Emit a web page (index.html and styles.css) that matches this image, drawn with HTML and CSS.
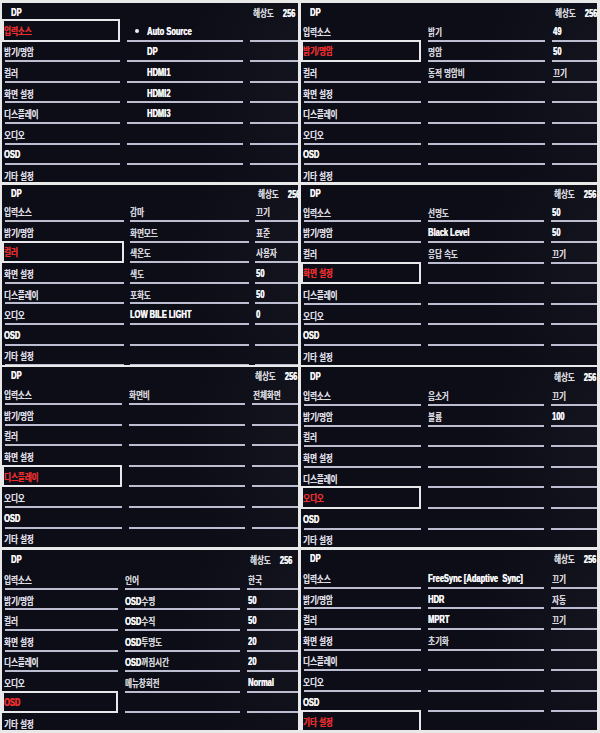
FILE: index.html
```html
<!DOCTYPE html>
<html lang="ko">
<head>
<meta charset="utf-8">
<title>OSD 메뉴</title>
<link rel="stylesheet" href="styles.css">
</head>
<body>
<main class="sheet">

<section class="osd p1">
  <div class="hd"><b class="t">DP</b></div>
  <div class="res"><span class="t">해상도<b>256</b></span></div>
  <div class="c1 sel"><span class="t">입력소스</span></div><div class="c2 ind"><i class="dot"></i><b class="t">Auto Source</b></div><div class="c3"></div>
  <div class="c1"><span class="t">밝기/명암</span></div><div class="c2 ind"><b class="t">DP</b></div><div class="c3"></div>
  <div class="c1"><span class="t">컬러</span></div><div class="c2 ind"><b class="t">HDMI1</b></div><div class="c3"></div>
  <div class="c1"><span class="t">화면 설정</span></div><div class="c2 ind"><b class="t">HDMI2</b></div><div class="c3"></div>
  <div class="c1"><span class="t">디스플레이</span></div><div class="c2 ind"><b class="t">HDMI3</b></div><div class="c3"></div>
  <div class="c1"><span class="t">오디오</span></div><div class="c2"></div><div class="c3"></div>
  <div class="c1"><b class="t">OSD</b></div><div class="c2"></div><div class="c3"></div>
  <div class="c1"><span class="t">기타 설정</span></div><div class="c2"></div><div class="c3"></div>
</section>

<section class="osd p2">
  <div class="hd"><b class="t">DP</b></div>
  <div class="res"><span class="t">해상도<b>256</b></span></div>
  <div class="c1"><span class="t">입력소스</span></div><div class="c2"><span class="t">밝기</span></div><div class="c3"><b class="t">49</b></div>
  <div class="c1 sel"><span class="t">밝기/명암</span></div><div class="c2"><span class="t">명암</span></div><div class="c3"><b class="t">50</b></div>
  <div class="c1"><span class="t">컬러</span></div><div class="c2"><span class="t">동적 명암비</span></div><div class="c3"><span class="t">끄기</span></div>
  <div class="c1"><span class="t">화면 설정</span></div><div class="c2"></div><div class="c3"></div>
  <div class="c1"><span class="t">디스플레이</span></div><div class="c2"></div><div class="c3"></div>
  <div class="c1"><span class="t">오디오</span></div><div class="c2"></div><div class="c3"></div>
  <div class="c1"><b class="t">OSD</b></div><div class="c2"></div><div class="c3"></div>
  <div class="c1"><span class="t">기타 설정</span></div><div class="c2"></div><div class="c3"></div>
</section>

<section class="osd p3">
  <div class="hd"><b class="t">DP</b></div>
  <div class="res"><span class="t">해상도<b>256</b></span></div>
  <div class="c1"><span class="t">입력소스</span></div><div class="c2"><span class="t">감마</span></div><div class="c3"><span class="t">끄기</span></div>
  <div class="c1"><span class="t">밝기/명암</span></div><div class="c2"><span class="t">화면모드</span></div><div class="c3"><span class="t">표준</span></div>
  <div class="c1 sel"><span class="t">컬러</span></div><div class="c2"><span class="t">색온도</span></div><div class="c3"><span class="t">사용자</span></div>
  <div class="c1"><span class="t">화면 설정</span></div><div class="c2"><span class="t">색도</span></div><div class="c3"><b class="t">50</b></div>
  <div class="c1"><span class="t">디스플레이</span></div><div class="c2"><span class="t">포화도</span></div><div class="c3"><b class="t">50</b></div>
  <div class="c1"><span class="t">오디오</span></div><div class="c2"><b class="t">LOW BILE LIGHT</b></div><div class="c3"><b class="t">0</b></div>
  <div class="c1"><b class="t">OSD</b></div><div class="c2"></div><div class="c3"></div>
  <div class="c1"><span class="t">기타 설정</span></div><div class="c2"></div><div class="c3"></div>
</section>

<section class="osd p4">
  <div class="hd"><b class="t">DP</b></div>
  <div class="res"><span class="t">해상도<b>256</b></span></div>
  <div class="c1"><span class="t">입력소스</span></div><div class="c2"><span class="t">선명도</span></div><div class="c3"><b class="t">50</b></div>
  <div class="c1"><span class="t">밝기/명암</span></div><div class="c2"><b class="t">Black Level</b></div><div class="c3"><b class="t">50</b></div>
  <div class="c1"><span class="t">컬러</span></div><div class="c2"><span class="t">응답 속도</span></div><div class="c3"><span class="t">끄기</span></div>
  <div class="c1 sel"><span class="t">화면 설정</span></div><div class="c2"></div><div class="c3"></div>
  <div class="c1"><span class="t">디스플레이</span></div><div class="c2"></div><div class="c3"></div>
  <div class="c1"><span class="t">오디오</span></div><div class="c2"></div><div class="c3"></div>
  <div class="c1"><b class="t">OSD</b></div><div class="c2"></div><div class="c3"></div>
  <div class="c1"><span class="t">기타 설정</span></div><div class="c2"></div><div class="c3"></div>
</section>

<section class="osd p5">
  <div class="hd"><b class="t">DP</b></div>
  <div class="res"><span class="t">해상도<b>256</b></span></div>
  <div class="c1"><span class="t">입력소스</span></div><div class="c2"><span class="t">화면비</span></div><div class="c3"><span class="t">전체화면</span></div>
  <div class="c1"><span class="t">밝기/명암</span></div><div class="c2"></div><div class="c3"></div>
  <div class="c1"><span class="t">컬러</span></div><div class="c2"></div><div class="c3"></div>
  <div class="c1"><span class="t">화면 설정</span></div><div class="c2"></div><div class="c3"></div>
  <div class="c1 sel"><span class="t">디스플레이</span></div><div class="c2"></div><div class="c3"></div>
  <div class="c1"><span class="t">오디오</span></div><div class="c2"></div><div class="c3"></div>
  <div class="c1"><b class="t">OSD</b></div><div class="c2"></div><div class="c3"></div>
  <div class="c1"><span class="t">기타 설정</span></div><div class="c2"></div><div class="c3"></div>
</section>

<section class="osd p6">
  <div class="hd"><b class="t">DP</b></div>
  <div class="res"><span class="t">해상도<b>256</b></span></div>
  <div class="c1"><span class="t">입력소스</span></div><div class="c2"><span class="t">음소거</span></div><div class="c3"><span class="t">끄기</span></div>
  <div class="c1"><span class="t">밝기/명암</span></div><div class="c2"><span class="t">볼륨</span></div><div class="c3"><b class="t">100</b></div>
  <div class="c1"><span class="t">컬러</span></div><div class="c2"></div><div class="c3"></div>
  <div class="c1"><span class="t">화면 설정</span></div><div class="c2"></div><div class="c3"></div>
  <div class="c1"><span class="t">디스플레이</span></div><div class="c2"></div><div class="c3"></div>
  <div class="c1 sel"><span class="t">오디오</span></div><div class="c2"></div><div class="c3"></div>
  <div class="c1"><b class="t">OSD</b></div><div class="c2"></div><div class="c3"></div>
  <div class="c1"><span class="t">기타 설정</span></div><div class="c2"></div><div class="c3"></div>
</section>

<section class="osd p7">
  <div class="hd"><b class="t">DP</b></div>
  <div class="res"><span class="t">해상도<b>256</b></span></div>
  <div class="c1"><span class="t">입력소스</span></div><div class="c2"><span class="t">언어</span></div><div class="c3"><span class="t">한국</span></div>
  <div class="c1"><span class="t">밝기/명암</span></div><div class="c2"><span class="t"><b>OSD</b>수평</span></div><div class="c3"><b class="t">50</b></div>
  <div class="c1"><span class="t">컬러</span></div><div class="c2"><span class="t"><b>OSD</b>수직</span></div><div class="c3"><b class="t">50</b></div>
  <div class="c1"><span class="t">화면 설정</span></div><div class="c2"><span class="t"><b>OSD</b>투명도</span></div><div class="c3"><b class="t">20</b></div>
  <div class="c1"><span class="t">디스플레이</span></div><div class="c2"><span class="t"><b>OSD</b>꺼짐시간</span></div><div class="c3"><b class="t">20</b></div>
  <div class="c1"><span class="t">오디오</span></div><div class="c2"><span class="t">메뉴창회전</span></div><div class="c3"><b class="t">Normal</b></div>
  <div class="c1 sel"><b class="t">OSD</b></div><div class="c2"></div><div class="c3"></div>
  <div class="c1"><span class="t">기타 설정</span></div><div class="c2"></div><div class="c3"></div>
</section>

<section class="osd p8">
  <div class="hd"><b class="t">DP</b></div>
  <div class="res"><span class="t">해상도<b>256</b></span></div>
  <div class="c1"><span class="t">입력소스</span></div><div class="c2"><b class="t">FreeSync [Adaptive&nbsp; Sync]</b></div><div class="c3"><span class="t">끄기</span></div>
  <div class="c1"><span class="t">밝기/명암</span></div><div class="c2"><b class="t">HDR</b></div><div class="c3"><span class="t">자동</span></div>
  <div class="c1"><span class="t">컬러</span></div><div class="c2"><b class="t">MPRT</b></div><div class="c3"><span class="t">끄기</span></div>
  <div class="c1"><span class="t">화면 설정</span></div><div class="c2"><span class="t">초기화</span></div><div class="c3"></div>
  <div class="c1"><span class="t">디스플레이</span></div><div class="c2"></div><div class="c3"></div>
  <div class="c1"><span class="t">오디오</span></div><div class="c2"></div><div class="c3"></div>
  <div class="c1"><b class="t">OSD</b></div><div class="c2"></div><div class="c3"></div>
  <div class="c1 sel"><span class="t">기타 설정</span></div><div class="c2"></div><div class="c3"></div>
</section>

</main>
</body>
</html>
```

FILE: styles.css
```css
html, body {
  margin: 0;
  padding: 0;
  background: #e9e9ea;
}

.sheet {
  width: 600px;
  height: 733px;
  box-sizing: border-box;
  padding: 3px 3px 0 2px;
  display: grid;
  grid-template-columns: 296px 296px;
  grid-template-rows: 179px 180px 180px 180px;
  column-gap: 3px;
  row-gap: 2.5px;
}

.osd {
  --c1: 120px;
  --c2: 116px;
  --gap: 7px;
  --hd: 18px;
  --line: #bcbdd0;
  display: grid;
  grid-template-columns: var(--c1) var(--c2) 1fr;
  grid-template-rows: var(--hd) repeat(8, 20.6px);
  column-gap: var(--gap);
  align-content: start;
  overflow: hidden;
  background:
    radial-gradient(ellipse 70% 130% at 110% 40%, rgba(120, 125, 150, 0.08), rgba(0, 0, 0, 0) 70%),
    #0c0d16;
  font-family: "Liberation Sans", "Noto Sans CJK KR", sans-serif;
  font-size: 10px;
  font-weight: 500;
  color: #dedee3;
  white-space: nowrap;
}

.p1 { --c1: 118px; }
.p2 { --c2: 117px; }
.p3 { --c1: 122px; --c2: 119px; --gap: 6px; --hd: 17px; }
.p4 { --hd: 17.4px; }
.p5 { --hd: 17.4px; }
.p6 { --hd: 18.4px; }
.p7 { --c1: 116px; --c2: 115px; --hd: 19.8px; }
.p8 { --hd: 18.7px; }

.t {
  display: inline-block;
  transform: scaleX(0.75);
  transform-origin: 0 50%;
  text-shadow: 0.35px 0 0 currentColor, 0 0 1px rgba(255, 255, 255, 0.25);
}

b {
  font-weight: 700;
  color: #f5f5f7;
}

.hd {
  grid-column: 1 / 3;
  display: flex;
  align-items: center;
  padding-left: 9px;
}

.res {
  display: flex;
  align-items: center;
  padding-left: 3px;
  color: #d8d8de;
}

.res b {
  margin-left: 12px;
}

.c1, .c2, .c3 {
  display: flex;
  align-items: center;
  background: linear-gradient(var(--line), var(--line)) no-repeat 0 100% / 100% 2px;
}

.c1 {
  padding-left: 2px;
  background-position: 3px 100%;
  background-size: calc(100% - 3px) 2px;
}

.c1.sel {
  margin-top: -2px;
  padding-left: 0;
  border: 2px solid #e8e8ec;
  background: none;
  color: #f0292a;
}

.c1.sel b {
  color: #f0292a;
}

.c2 {
  color: #d3d4da;
}

.c2.ind {
  padding-left: 20px;
}

.dot {
  display: block;
  width: 4px;
  height: 4px;
  margin-left: -12px;
  margin-right: 8px;
  border-radius: 50%;
  background: #f2f2f4;
}

.c3 {
  padding-left: 1px;
  color: #d8d8de;
}
```
